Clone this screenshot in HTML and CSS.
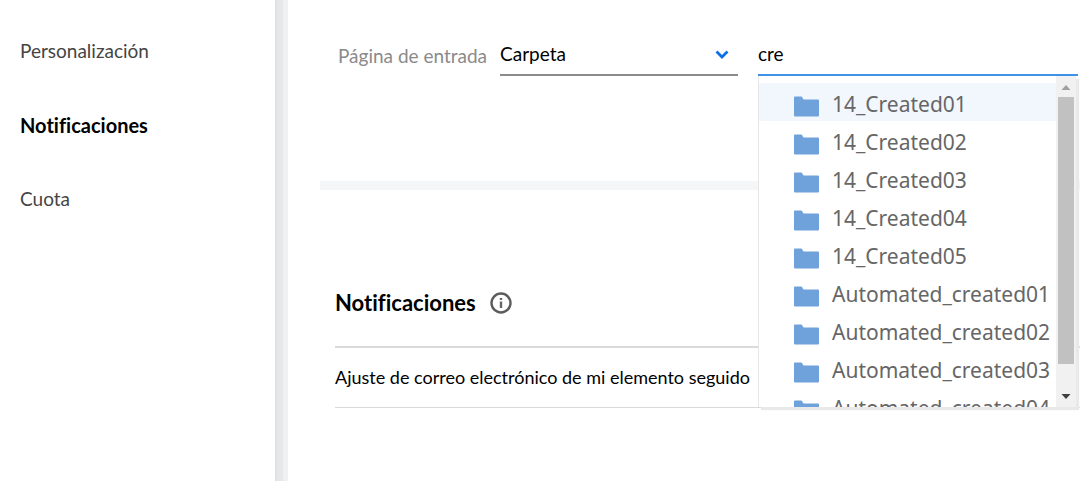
FILE: index.html
```html
<!DOCTYPE html>
<html lang="es">
<head>
<meta charset="utf-8">
<title>Notificaciones</title>
<link rel="stylesheet" href="styles.css">
</head>
<body>
<svg class="defs" aria-hidden="true">
  <symbol id="folder" viewBox="0 0 25 21">
    <path d="M1 .5h6q1 0 1.300.8l.6 1.500q.3.700 1.200.700H24q1 0 1 1v15q0 1-1 1H1q-1 0-1-1v-18q0-1 1-1z" fill="#6fa2da"/>
  </symbol>
</svg>
<div class="page">
  <nav class="sidebar">
    <a class="nav-link" href="#personalizacion">Personalización</a>
    <a class="nav-link nav-link-active" href="#notificaciones">Notificaciones</a>
    <a class="nav-link" href="#cuota">Cuota</a>
  </nav>
  <div class="divider"></div>
  <main class="content">
    <section class="entry">
      <label class="entry-label" for="entry-type">Página de entrada</label>
      <div class="select-wrap">
        <select class="select" id="entry-type"><option>Carpeta</option></select>
        <svg class="chevron" viewBox="0 0 14 9" aria-hidden="true"><path d="M1.500 1.500 7 7l5.500-5.500" fill="none" stroke="#0c6fe8" stroke-width="2.800"/></svg>
      </div>
      <div class="combo">
        <input class="combo-input" type="text" value="cre" aria-label="Carpeta" role="combobox" aria-expanded="true" aria-controls="folders">
        <div class="menu">
          <ul class="options" id="folders" role="listbox">
            <li class="option option-active" role="option"><svg class="folder"><use href="#folder"/></svg>14_Created01</li>
            <li class="option" role="option"><svg class="folder"><use href="#folder"/></svg>14_Created02</li>
            <li class="option" role="option"><svg class="folder"><use href="#folder"/></svg>14_Created03</li>
            <li class="option" role="option"><svg class="folder"><use href="#folder"/></svg>14_Created04</li>
            <li class="option" role="option"><svg class="folder"><use href="#folder"/></svg>14_Created05</li>
            <li class="option" role="option"><svg class="folder"><use href="#folder"/></svg>Automated_created01</li>
            <li class="option" role="option"><svg class="folder"><use href="#folder"/></svg>Automated_created02</li>
            <li class="option" role="option"><svg class="folder"><use href="#folder"/></svg>Automated_created03</li>
            <li class="option" role="option"><svg class="folder"><use href="#folder"/></svg>Automated_created04</li>
          </ul>
          <div class="scrollbar" aria-hidden="true">
            <svg class="arrow" viewBox="0 0 20 20"><path d="M5.500 13.500h9L10 8.500z" fill="#a0a0a0"/></svg>
            <div class="thumb"></div>
            <svg class="arrow arrow-down" viewBox="0 0 20 20"><path d="M5.500 7.500h9L10 12.500z" fill="#404040"/></svg>
          </div>
        </div>
      </div>
    </section>
    <div class="band"></div>
    <section class="notifications">
      <h2 class="heading">Notificaciones
        <svg class="info" viewBox="0 0 22 22" aria-hidden="true"><circle cx="11" cy="11" r="9.500" fill="none" stroke="#5c5c5c" stroke-width="2.400"/><path d="M11 9.500V16M11 6v2" stroke="#666" stroke-width="2.400"/></svg>
      </h2>
      <p class="setting">Ajuste de correo electrónico de mi elemento seguido</p>
    </section>
  </main>
</div>
</body>
</html>
```
FILE: styles.css
```css
* {
  box-sizing: border-box;
}

body {
  margin: 0;
  background: #fff;
  color: #000;
  font-family: Lato, "Liberation Sans", sans-serif;
  font-size: 19px;
  font-variant-ligatures: none;
  line-height: 24px;
}

.defs {
  position: absolute;
  width: 0;
  height: 0;
}

.page {
  display: flex;
  min-height: 100vh;
}

.sidebar {
  display: flex;
  flex: 0 0 275px;
  flex-direction: column;
  align-items: flex-start;
  gap: 50px;
  padding: 39px 20px;
}

.nav-link {
  color: #444;
  text-decoration: none;
}

.nav-link-active {
  color: #000;
  font-size: 20px;
  font-weight: 700;
}

.divider {
  flex: 0 0 14px;
  border-left: 2px solid #dfe0e1;
  background: linear-gradient(to right, #e5e7e9 6px, #eff1f2 6px 11px, #fff 11px);
}

.content {
  flex: 1;
  min-width: 0;
  padding-left: 31px;
}

.entry {
  display: flex;
  align-items: flex-start;
  height: 181px;
  padding: 34px 4px 0 18px;
}

.entry-label {
  flex: 0 0 162px;
  padding-top: 10px;
  color: #8a8a8a;
}

.select-wrap {
  display: grid;
  flex: 3;
  align-items: center;
  height: 42px;
  margin-right: 20px;
  border-bottom: 2px solid #8b8b8b;
}

.select,
.chevron {
  grid-area: 1 / 1;
}

.select {
  width: 100%;
  height: 40px;
  padding: 0;
  border: 0;
  background: none;
  color: #000;
  font: inherit;
  appearance: none;
}

.chevron {
  justify-self: end;
  width: 14px;
  height: 9px;
  margin-right: 9px;
  pointer-events: none;
}

.combo {
  position: relative;
  flex: 0 0 320px;
}

.combo-input {
  display: block;
  width: 100%;
  height: 42px;
  padding: 0 0 2px;
  border: 0;
  border-bottom: 2px solid #3e91e8;
  background: none;
  color: #000;
  font: inherit;
  outline: 0;
}

.menu {
  position: absolute;
  z-index: 1;
  top: 100%;
  left: 0;
  display: flex;
  width: 318px;
  height: 331px;
  border-left: 1px solid #e6e6e6;
  background: #fff;
  box-shadow: 3px 3px 1px #e9e9e9;
}

.options {
  flex: 1;
  margin: 0;
  padding: 7px 0 0;
  overflow: hidden;
  color: #666;
  font-family: "Noto Sans", sans-serif;
  font-size: 21px;
  list-style: none;
}

.option {
  display: flex;
  align-items: center;
  gap: 13px;
  height: 38px;
  padding: 4px 0 0 35px;
  white-space: nowrap;
}

.option-active {
  background: #f2f7fe;
}

.folder {
  flex: none;
  width: 25px;
  height: 21px;
  margin-top: 4px;
}

.scrollbar {
  display: flex;
  flex: 0 0 20px;
  flex-direction: column;
  background: #f1f1f1;
}

.arrow {
  width: 20px;
  height: 21px;
}

.thumb {
  height: 267px;
  margin: 0 2px;
  background: #c1c1c1;
}

.arrow-down {
  margin-top: auto;
}

.band {
  height: 9px;
  margin-right: 2px;
  background: #f4f6f8;
}

.notifications {
  padding: 101px 2px 0 15px;
}

.heading {
  display: flex;
  align-items: center;
  gap: 14px;
  margin: 0;
  padding-bottom: 31px;
  border-bottom: 2px solid #dadada;
  font-size: 22px;
}

.info {
  width: 22px;
  height: 22px;
}

.setting {
  margin: 0;
  padding: 17px 0 18px;
  border-bottom: 1px solid #dadada;
  font-size: 18px;
}
```
